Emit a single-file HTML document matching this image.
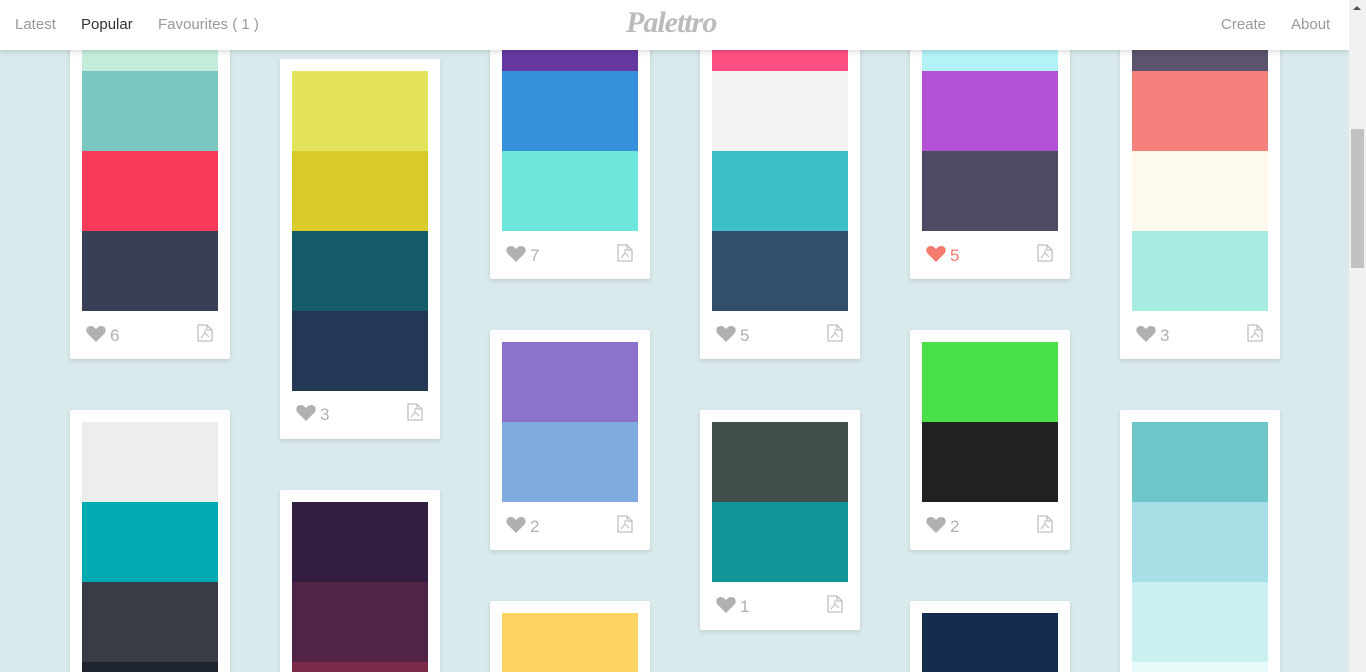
<!DOCTYPE html>
<html><head><meta charset="utf-8"><style>
*{margin:0;padding:0;box-sizing:border-box}
html,body{width:1366px;height:672px;overflow:hidden}
body{background:#d9eaed;font-family:"Liberation Sans",sans-serif}
#w{position:relative;width:1366px;height:672px;overflow:hidden}
.hd{position:absolute;left:0;top:0;width:1349px;height:50px;background:#fff;box-shadow:0 1px 6px rgba(0,0,0,.18);z-index:5}
.hd a{position:absolute;top:16px;font-size:15px;color:#999;text-decoration:none}
.logo{position:absolute;left:626px;top:6px;font-family:"Liberation Serif",serif;font-style:italic;font-weight:bold;font-size:30px;color:#bbb;letter-spacing:-1px}
.sb{position:absolute;left:1349px;top:0;width:17px;height:672px;background:#f1f1f1;z-index:6}
.sb .t{position:absolute;left:2px;top:129px;width:13px;height:139px;background:#c1c1c1}
.sb .a{position:absolute;left:4px;top:6px;width:0;height:0;border-left:4px solid transparent;border-right:4px solid transparent;border-bottom:4px solid #505050}
.c{position:absolute;width:160px;background:#fff;border-radius:2px;box-shadow:0 2px 5px rgba(0,0,0,.12)}
.c.b{overflow:hidden;border-radius:2px 2px 0 0}
.s{position:absolute;left:12px;width:136px;height:80px}
.f{position:absolute;left:0;width:160px;height:24px}
.f svg.h{position:absolute;left:16px;top:2px}
.f span{position:absolute;left:40px;top:3px;font-size:17px;color:#b0b0b0}
.f svg.p{position:absolute;left:126px;top:1px}
.f.r span{color:#f47a6e}
</style></head><body><div id="w">
<div class="hd">
<a style="left:15px">Latest</a><a style="left:81px;color:#333">Popular</a><a style="left:158px">Favourites ( 1 )</a>
<div class="logo">Palettro</div>
<a style="left:1221px">Create</a><a style="left:1291px">About</a>
</div>
<div class="sb"><div class="a"></div><div class="t"></div></div>

<svg width="0" height="0" style="position:absolute"><defs>
<symbol id="ht" viewBox="0 0 20 17"><path d="M10 17 L2 9 C-1 6 0 1 5 1 C7.5 1 9 3 10 4 C11 3 12.5 1 15 1 C20 1 21 6 18 9 Z"/></symbol>
<symbol id="pd" viewBox="0 0 18 18"><path d="M2 1 H11 L16 6 V17 H2 Z M11 1 V6 H16" fill="none" stroke="#c0c0c0" stroke-width="1.3"/><path d="M5 14 L9 9 L13 13 M9 9 L9 5" fill="none" stroke="#c0c0c0" stroke-width="1.1"/></symbol>
</defs></svg>

<div class="c" style="left:70px;top:20px;height:339px">
<div class="s" style="top:-29px;background:#c4ecdb"></div>
<div class="s" style="top:51px;background:#7cc6c2"></div>
<div class="s" style="top:131px;background:#f7395a"></div>
<div class="s" style="top:211px;background:#3a3f58"></div>
<div class="f" style="top:303px"><svg class="h" width="20" height="17" fill="#b0b0b0"><use href="#ht"/></svg><span>6</span><svg class="p" width="18" height="18"><use href="#pd"/></svg></div>
</div>
<div class="c b" style="left:70px;top:410px;height:262px">
<div class="s" style="top:12px;background:#ededed"></div>
<div class="s" style="top:92px;background:#00abb1"></div>
<div class="s" style="top:172px;background:#373c45"></div>
<div class="s" style="top:252px;background:#1f2530"></div>
</div>
<div class="c" style="left:280px;top:59px;height:380px">
<div class="s" style="top:12px;background:#e4e45c"></div>
<div class="s" style="top:92px;background:#dacb2b"></div>
<div class="s" style="top:172px;background:#155a6b"></div>
<div class="s" style="top:252px;background:#233854"></div>
<div class="f" style="top:343px"><svg class="h" width="20" height="17" fill="#b0b0b0"><use href="#ht"/></svg><span>3</span><svg class="p" width="18" height="18"><use href="#pd"/></svg></div>
</div>
<div class="c b" style="left:280px;top:490px;height:182px">
<div class="s" style="top:12px;background:#331d40"></div>
<div class="s" style="top:92px;background:#512446"></div>
<div class="s" style="top:172px;background:#7b2a4a"></div>
</div>
<div class="c" style="left:490px;top:20px;height:259px">
<div class="s" style="top:-29px;background:#6538a0"></div>
<div class="s" style="top:51px;background:#3690dc"></div>
<div class="s" style="top:131px;background:#6fe6dc"></div>
<div class="f" style="top:223px"><svg class="h" width="20" height="17" fill="#b0b0b0"><use href="#ht"/></svg><span>7</span><svg class="p" width="18" height="18"><use href="#pd"/></svg></div>
</div>
<div class="c" style="left:490px;top:330px;height:220px">
<div class="s" style="top:12px;background:#8b73cd"></div>
<div class="s" style="top:92px;background:#7eabe0"></div>
<div class="f" style="top:184px"><svg class="h" width="20" height="17" fill="#b0b0b0"><use href="#ht"/></svg><span>2</span><svg class="p" width="18" height="18"><use href="#pd"/></svg></div>
</div>
<div class="c b" style="left:490px;top:601px;height:71px">
<div class="s" style="top:12px;background:#fed363"></div>
</div>
<div class="c" style="left:700px;top:20px;height:339px">
<div class="s" style="top:-29px;background:#fe4f82"></div>
<div class="s" style="top:51px;background:#f3f3f3"></div>
<div class="s" style="top:131px;background:#3dbfc8"></div>
<div class="s" style="top:211px;background:#334e6a"></div>
<div class="f" style="top:303px"><svg class="h" width="20" height="17" fill="#b0b0b0"><use href="#ht"/></svg><span>5</span><svg class="p" width="18" height="18"><use href="#pd"/></svg></div>
</div>
<div class="c" style="left:700px;top:410px;height:220px">
<div class="s" style="top:12px;background:#3f4e4b"></div>
<div class="s" style="top:92px;background:#12969a"></div>
<div class="f" style="top:184px"><svg class="h" width="20" height="17" fill="#b0b0b0"><use href="#ht"/></svg><span>1</span><svg class="p" width="18" height="18"><use href="#pd"/></svg></div>
</div>
<div class="c" style="left:910px;top:20px;height:259px">
<div class="s" style="top:-29px;background:#b3f3f7"></div>
<div class="s" style="top:51px;background:#b551d6"></div>
<div class="s" style="top:131px;background:#4d4b63"></div>
<div class="f r" style="top:223px"><svg class="h" width="20" height="17" fill="#f47a6e"><use href="#ht"/></svg><span>5</span><svg class="p" width="18" height="18"><use href="#pd"/></svg></div>
</div>
<div class="c" style="left:910px;top:330px;height:220px">
<div class="s" style="top:12px;background:#4ae04a"></div>
<div class="s" style="top:92px;background:#212121"></div>
<div class="f" style="top:184px"><svg class="h" width="20" height="17" fill="#b0b0b0"><use href="#ht"/></svg><span>2</span><svg class="p" width="18" height="18"><use href="#pd"/></svg></div>
</div>
<div class="c b" style="left:910px;top:601px;height:71px">
<div class="s" style="top:12px;background:#142c4d"></div>
</div>
<div class="c" style="left:1120px;top:20px;height:339px">
<div class="s" style="top:-29px;background:#5c546e"></div>
<div class="s" style="top:51px;background:#f47f7b"></div>
<div class="s" style="top:131px;background:#fdfaed"></div>
<div class="s" style="top:211px;background:#a6ece2"></div>
<div class="f" style="top:303px"><svg class="h" width="20" height="17" fill="#b0b0b0"><use href="#ht"/></svg><span>3</span><svg class="p" width="18" height="18"><use href="#pd"/></svg></div>
</div>
<div class="c b" style="left:1120px;top:410px;height:262px">
<div class="s" style="top:12px;background:#6dc6ca"></div>
<div class="s" style="top:92px;background:#a6e0e6"></div>
<div class="s" style="top:172px;background:#cbf0f2"></div>
<div class="s" style="top:252px;background:#e6fafa"></div>
</div>
</div></body></html>
